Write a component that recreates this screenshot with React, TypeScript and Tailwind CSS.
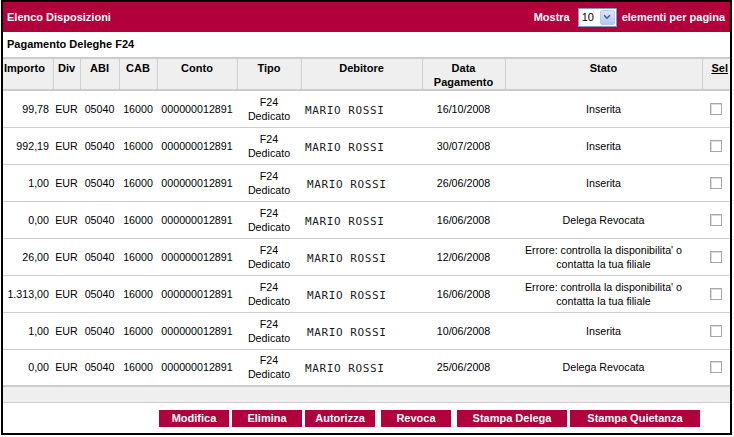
import { ChevronDown } from "lucide-react"

type Row = {
  importo: string
  data: string
  stato: string[]
  shift?: boolean
}

const rows: Row[] = [
  { importo: "99,78", data: "16/10/2008", stato: ["Inserita"] },
  { importo: "992,19", data: "30/07/2008", stato: ["Inserita"] },
  { importo: "1,00", data: "26/06/2008", stato: ["Inserita"], shift: true },
  { importo: "0,00", data: "16/06/2008", stato: ["Delega Revocata"] },
  { importo: "26,00", data: "12/06/2008", stato: ["Errore: controlla la disponibilita' o", "contatta la tua filiale"], shift: true },
  { importo: "1.313,00", data: "16/06/2008", stato: ["Errore: controlla la disponibilita' o", "contatta la tua filiale"], shift: true },
  { importo: "1,00", data: "10/06/2008", stato: ["Inserita"], shift: true },
  { importo: "0,00", data: "25/06/2008", stato: ["Delega Revocata"] },
]

const buttons = [
  { label: "Modifica", w: "w-[70px]", ml: "ml-0" },
  { label: "Elimina", w: "w-[70px]", ml: "ml-[3px]" },
  { label: "Autorizza", w: "w-[70px]", ml: "ml-[3px]" },
  { label: "Revoca", w: "w-[70px]", ml: "ml-[6px]" },
  { label: "Stampa Delega", w: "w-[110px]", ml: "ml-[6px]" },
  { label: "Stampa Quietanza", w: "w-[130px]", ml: "ml-[3px]" },
]

const th = "border-r border-[#d0d0d0] align-top pt-[2px] font-bold text-[11px] leading-[14px] text-black"
const td = "align-middle text-[10.7px] leading-[14px] text-black text-center"

export default function App() {
  return (
    <div className="w-[734px] h-[437px] bg-white font-['Liberation_Sans',Arial,sans-serif]">
      <div className="ml-[1px] w-[731px] h-[435px] border-2 border-black flex flex-col">
        <div className="h-[30px] bg-[#b1003b] flex items-center justify-between pl-[4px] pr-[5px] text-white text-[11px] font-bold">
          <span>Elenco Disposizioni</span>
          <div className="flex items-center">
            <span>Mostra</span>
            <div className="ml-[8px] w-[39px] h-[19px] border border-[#7f9db9] bg-white flex items-center justify-between p-[1px]">
              <span className="pl-[2px] text-black font-normal text-[11px]">10</span>
              <span className="w-[15px] h-[15px] rounded-[2px] border border-[#b8c8f0] bg-gradient-to-b from-[#dde6fd] to-[#b4c6f6] flex items-center justify-center">
                <ChevronDown className="w-[10px] h-[10px] text-[#4d6185]" strokeWidth={4} />
              </span>
            </div>
            <span className="ml-[5px]">elementi per pagina</span>
          </div>
        </div>

        <div className="h-[25px] flex items-center pl-[4px] text-[11px] font-bold text-black">
          Pagamento Deleghe F24
        </div>

        <table className="table-fixed border-collapse w-[727px]">
          <colgroup>
            <col className="w-[50px]" />
            <col className="w-[27px]" />
            <col className="w-[39px]" />
            <col className="w-[38px]" />
            <col className="w-[80px]" />
            <col className="w-[64px]" />
            <col className="w-[121px]" />
            <col className="w-[83px]" />
            <col className="w-[197px]" />
            <col className="w-[28px]" />
          </colgroup>
          <thead>
            <tr className="h-[31px] bg-[#efefef] border-t-2 border-b-2 border-[#cccccc]">
              <th className={`${th} text-left pl-[1px]`}>Importo</th>
              <th className={th}>Div</th>
              <th className={th}>ABI</th>
              <th className={th}>CAB</th>
              <th className={th}>Conto</th>
              <th className={th}>Tipo</th>
              <th className={th}>Debitore</th>
              <th className={th}>
                Data
                <br />
                Pagamento
              </th>
              <th className={th}>Stato</th>
              <th className={`${th} border-r-0 text-right pr-[2px]`}>
                <span className="underline">Sel</span>
              </th>
            </tr>
          </thead>
          <tbody>
            {rows.map((r, i) => (
              <tr
                key={i}
                className={`h-[37px] ${i === rows.length - 1 ? "border-b-2" : "border-b"} border-[#cccccc]`}
              >
                <td className={`${td} text-right pr-[4px]`}>{r.importo}</td>
                <td className={td}>EUR</td>
                <td className={td}>05040</td>
                <td className={td}>16000</td>
                <td className={td}>000000012891</td>
                <td className={td}>
                  F24
                  <br />
                  Dedicato
                </td>
                <td className="align-middle text-left">
                  <span
                    className={`${r.shift ? "pl-[6px]" : "pl-[4px]"} font-['DejaVu_Sans_Mono',monospace] text-[11px] tracking-[0.6px] text-[#1a1a1a]`}
                  >
                    MARIO ROSSI
                  </span>
                </td>
                <td className={td}>{r.data}</td>
                <td className={td}>
                  {r.stato.map((s, j) => (
                    <div key={j}>{s}</div>
                  ))}
                </td>
                <td className="align-middle">
                  <div className="flex justify-center">
                    <span className="w-[12px] h-[12px] border border-[#a8a8a8] bg-white shadow-[inset_1px_1px_0_#dcdcdc]" />
                  </div>
                </td>
              </tr>
            ))}
          </tbody>
        </table>

        <div className="h-[16px] bg-[#efefef] border-b border-[#cccccc]" />

        <div className="flex-1 flex items-start pt-[7px] pl-[156px]">
          {buttons.map((b) => (
            <button
              key={b.label}
              className={`${b.w} ${b.ml} h-[17px] bg-[#b1003b] text-white text-[11px] font-bold leading-[17px]`}
            >
              {b.label}
            </button>
          ))}
        </div>
      </div>
    </div>
  )
}
